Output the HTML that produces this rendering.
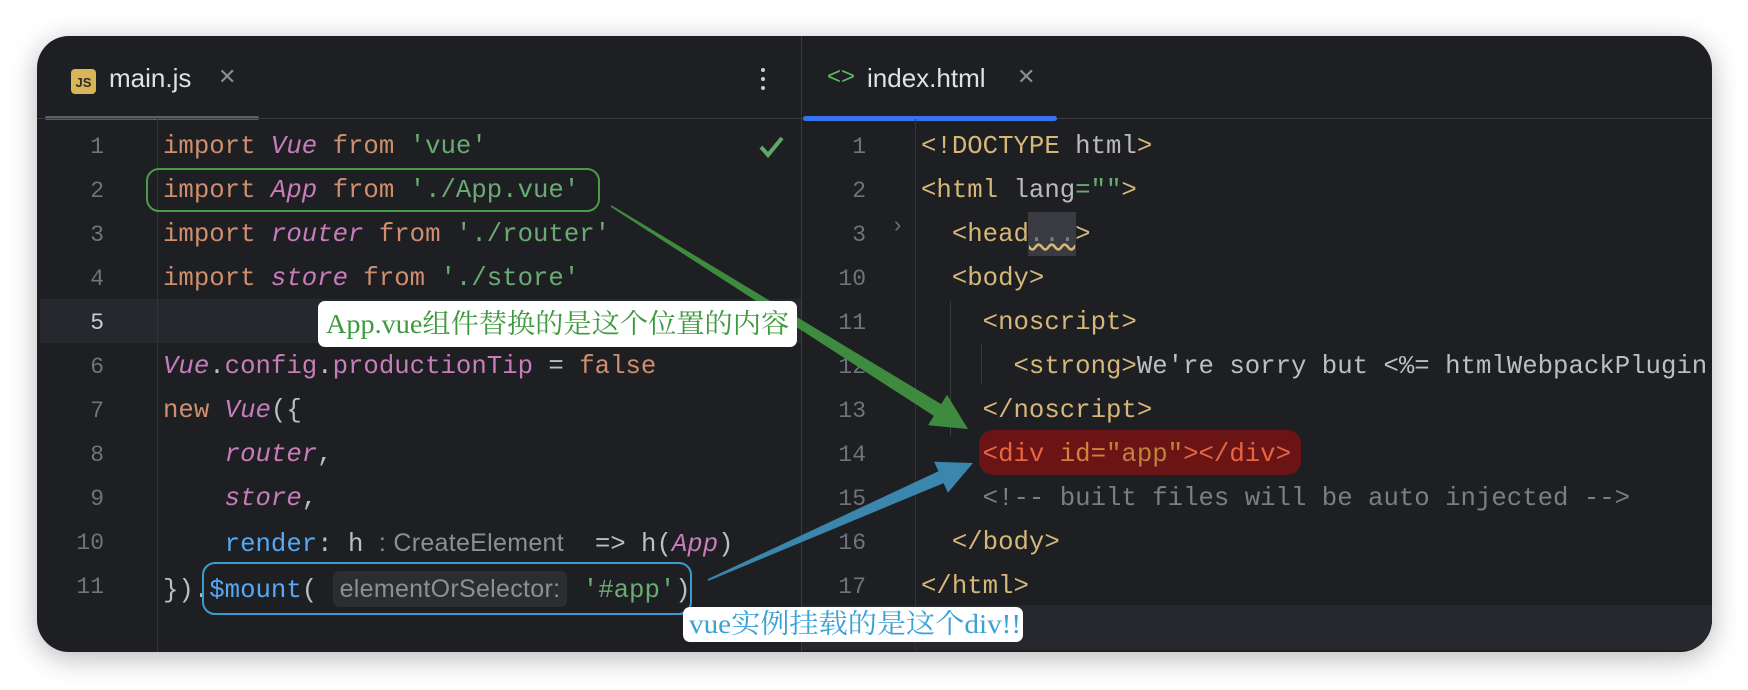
<!DOCTYPE html>
<html><head><meta charset="utf-8"><style>
html,body{margin:0;padding:0;background:#fff;width:1748px;height:690px;overflow:hidden}
#win{position:absolute;left:37px;top:36px;width:1675px;height:616px;background:#1e1f22;border-radius:32px;box-shadow:0 6px 28px rgba(0,0,0,.28);overflow:hidden}
.abs{position:absolute}
.code{font-family:"Liberation Mono",monospace;font-size:25.7px;white-space:pre;line-height:44px;color:#bcbec4}
.ln{font-family:"Liberation Mono",monospace;font-size:23px;color:#6f737a;text-align:right;width:60px;line-height:44px}
.k{color:#cf8e6d}.p{color:#c77dbb;font-style:italic}.s{color:#6aab73}.b{color:#56a8f5}.t{color:#d5b778}.c{color:#7a7e85}.a{color:#bababa}
.sans{font-family:"Liberation Sans",sans-serif}
.cjk{font-family:"Liberation Serif","Noto Serif CJK SC",serif}
.hint{font-family:"Liberation Sans",sans-serif;font-size:25px;color:#8c8f94;letter-spacing:0.3px}
</style></head><body>
<div id="win">
  <div class="abs" style="left:34px;top:33px;width:25px;height:25px;background:#d6b656;border-radius:4px;font:bold 13px 'Liberation Sans',sans-serif;color:#2b2b2b;text-align:center;line-height:27px">JS</div>
  <div class="abs sans" style="left:72px;top:27px;font-size:26px;color:#dfe1e5">main.js</div>
  <div class="abs sans" style="left:181px;top:28px;font-size:22px;color:#8a8d92">✕</div>
  <div class="abs" style="left:724px;top:32px;width:4px;height:4px;background:#ccc;border-radius:2px;box-shadow:0 9px 0 #ccc,0 18px 0 #ccc"></div>
  <div class="abs" style="left:8px;top:80px;width:214px;height:4px;background:#5c5f66;border-radius:2px"></div>
  <div class="abs" style="left:0;top:82px;width:1675px;height:1px;background:#393b40"></div>
  <div class="abs" style="left:764px;top:0;width:1px;height:616px;background:#393b40"></div>
  <div class="abs" style="left:766px;top:80px;width:254px;height:5px;background:#3574f0;border-radius:3px"></div>
  <div class="abs sans" style="left:790px;top:27px;font-size:24px;color:#5fb85f">&lt;&gt;</div>
  <div class="abs sans" style="left:830px;top:27px;font-size:26px;color:#dfe1e5">index.html</div>
  <div class="abs sans" style="left:980px;top:28px;font-size:22px;color:#8a8d92">✕</div>

  <div class="abs" style="left:3px;top:263px;width:761px;height:44px;background:#26282e"></div>
  <div class="abs" style="left:120px;top:83px;width:1px;height:540px;background:#313337"></div>
  <div class="abs ln" style="left:7px;top:89px">1<br>2<br>3<br>4<br><span style="color:#c9ccd2">5</span><br>6<br>7<br>8<br>9<br>10<br>11</div>
  <div class="abs code" style="left:126px;top:89px"><span class="k">import</span> <span class="p">Vue</span> <span class="k">from</span> <span class="s">'vue'</span>
<span class="k">import</span> <span class="p">App</span> <span class="k">from</span> <span class="s">'./App.vue'</span>
<span class="k">import</span> <span class="p">router</span> <span class="k">from</span> <span class="s">'./router'</span>
<span class="k">import</span> <span class="p">store</span> <span class="k">from</span> <span class="s">'./store'</span>

<span class="p">Vue</span>.<span style="color:#c77dbb">config</span>.<span style="color:#c77dbb">productionTip</span> = <span class="k">false</span>
<span class="k">new</span> <span class="p">Vue</span>({
    <span class="p">router</span>,
    <span class="p">store</span>,
    <span class="b">render</span>: h <span class="hint">: CreateElement</span>  =&gt; h(<span class="p">App</span>)
}).<span class="b">$mount</span>( <span class="hint" style="background:#2b2d30;border-radius:6px;padding:4px 7px">elementOrSelector:</span> <span class="s">'#app'</span>)</div>
  <svg class="abs" style="left:720px;top:96px" width="30" height="30"><path d="M4 15 L11 23 L25 6" stroke="#5fa865" stroke-width="4" fill="none"/></svg>

  <div class="abs" style="left:765px;top:569px;width:910px;height:45px;background:#26282e"></div>
  <div class="abs" style="left:878px;top:83px;width:1px;height:540px;background:#313337"></div>
  <div class="abs" style="left:913px;top:265px;width:1px;height:135px;background:#393b40"></div>
  <div class="abs" style="left:944px;top:308px;width:1px;height:40px;background:#393b40"></div>
  <div class="abs ln" style="left:769px;top:89px">1<br>2<br>3<br>10<br>11<br>12<br>13<br>14<br>15<br>16<br>17</div>
  <div class="abs sans" style="left:857px;top:176px;font-size:22px;color:#6f737a">›</div>
  <div class="abs" style="left:991px;top:176px;width:48px;height:44px;background:#393b40"></div>
  <div class="abs" style="left:942px;top:394px;width:322px;height:45px;background:#6b1416;border-radius:14px"></div>
  <div class="abs code" style="left:884px;top:89px"><span class="t">&lt;!DOCTYPE</span> <span class="a">html</span><span class="t">&gt;</span>
<span class="t">&lt;html</span> <span class="a">lang</span><span class="s">=""</span><span class="t">&gt;</span>
  <span class="t">&lt;head</span><span class="c" style="text-decoration:underline wavy #d5b778">...</span><span class="t">&gt;</span>
  <span class="t">&lt;body&gt;</span>
    <span class="t">&lt;noscript&gt;</span>
      <span class="t">&lt;strong&gt;</span>We're sorry but &lt;%= htmlWebpackPlugin
    <span class="t">&lt;/noscript&gt;</span>
    <span style="color:#e8663f">&lt;div</span> <span style="color:#d4803f">id=</span><span style="color:#c0823e">"app"</span><span style="color:#e8663f">&gt;&lt;/div&gt;</span>
    <span class="c">&lt;!-- built files will be auto injected --&gt;</span>
  <span class="t">&lt;/body&gt;</span>
<span class="t">&lt;/html&gt;</span></div>
</div>

<div class="abs" style="left:146px;top:168px;width:450px;height:40px;border:2px solid #4a9c4a;border-radius:13px"></div>
<div class="abs" style="left:202px;top:562px;width:486px;height:49px;border:2px solid #3b9bd1;border-radius:13px"></div>
<svg class="abs" style="left:0;top:0" width="1748" height="690">
  <polygon points="611.5,205.2 941.2,404.1 947,394.7 968,429 928,425.3 933.8,415.9 610.5,206.8" fill="#3e8a3e"/>
  <polygon points="707.6,579.1 938.4,471.3 934.1,461.7 973,463 947.9,492.7 943.6,483.1 708.4,580.9" fill="#3a86ad"/>
</svg>
<div class="abs cjk" style="left:318px;top:301px;width:479px;height:46px;background:#fff;border-radius:7px;color:#3e9a3e;font-size:27px;line-height:46px;white-space:nowrap;padding-left:8px;box-sizing:border-box;overflow:hidden"><span style="display:inline-block;transform:scaleX(1.045);transform-origin:left">App.vue组件替换的是这个位置的内容</span></div>
<div class="abs cjk" style="left:683px;top:607px;width:340px;height:35px;background:#fff;border-radius:7px;color:#3aa0d8;font-size:27px;line-height:35px;white-space:nowrap;padding-left:6px;box-sizing:border-box;overflow:hidden"><span style="display:inline-block;transform:scaleX(1.08);transform-origin:left">vue实例挂载的是这个div!!</span></div>
</body></html>
